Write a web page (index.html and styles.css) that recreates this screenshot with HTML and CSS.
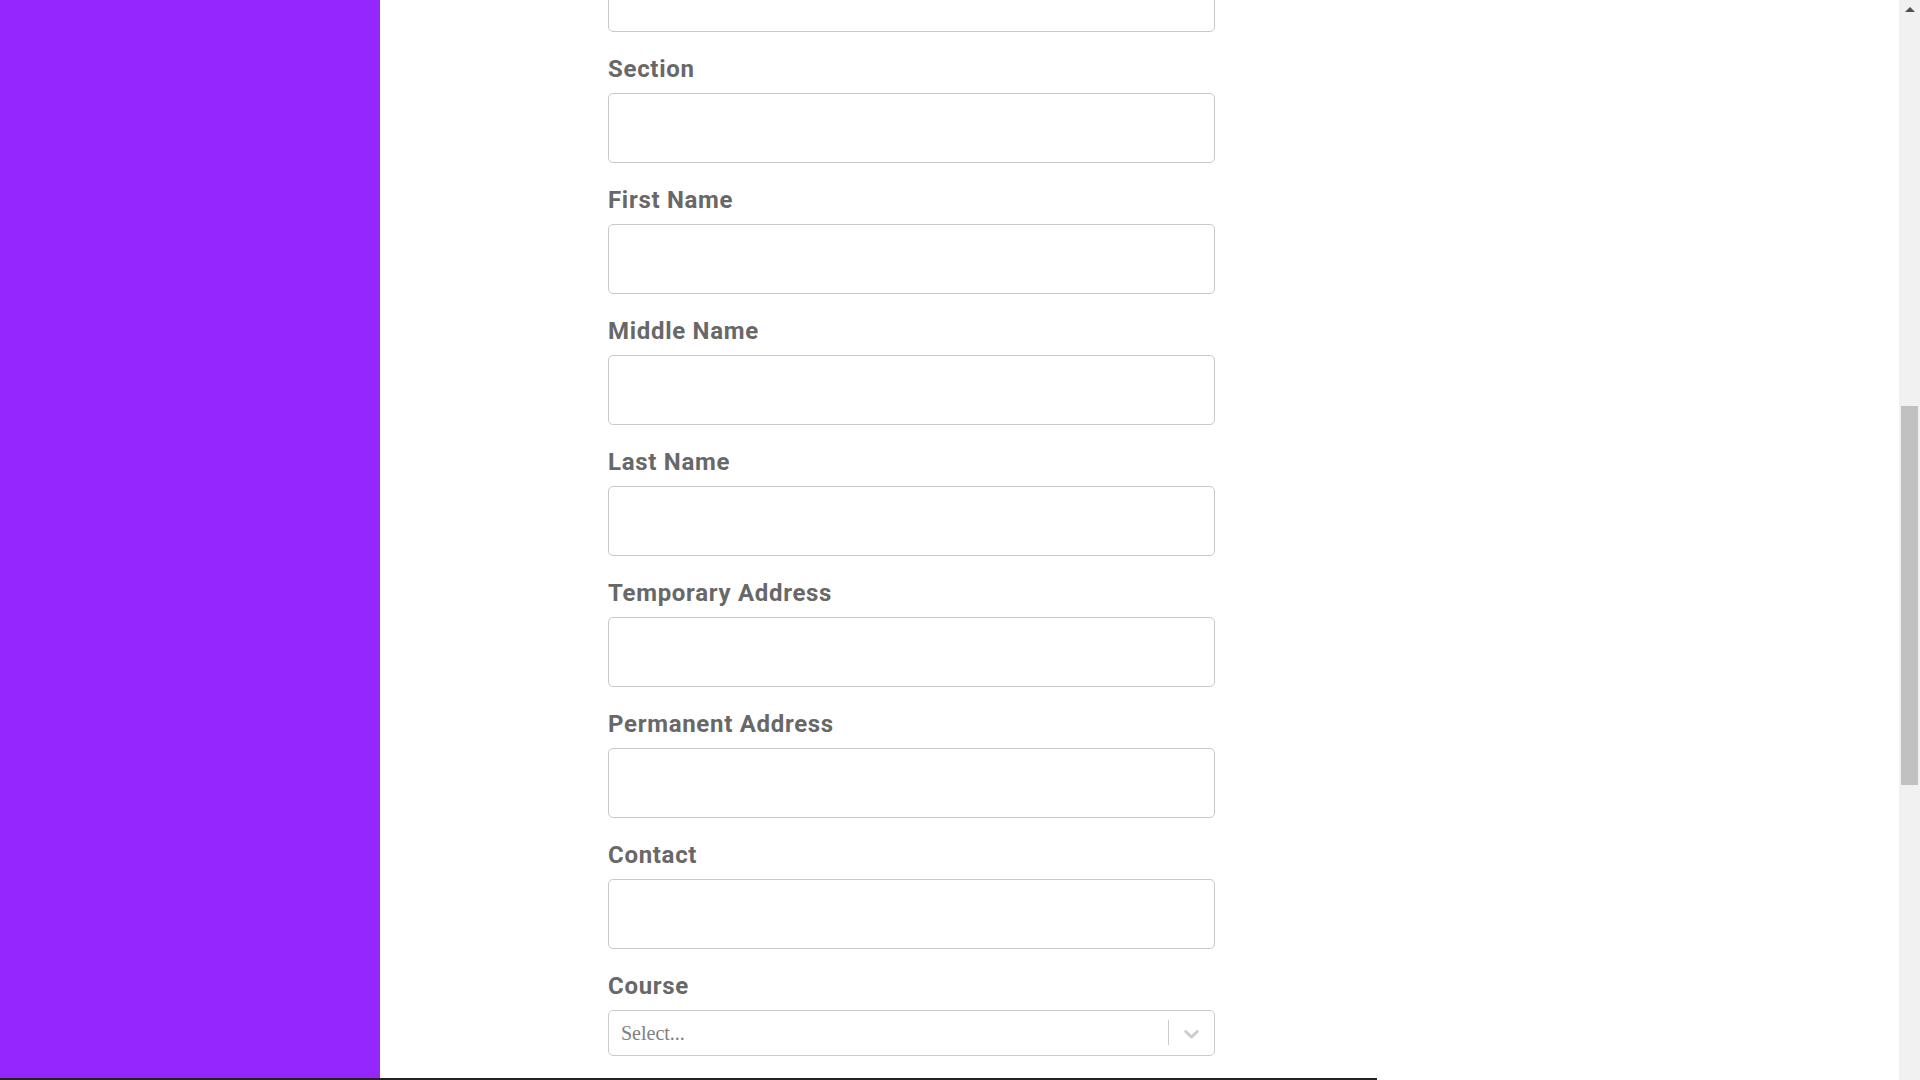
FILE: index.html
```html
<!DOCTYPE html>
<html lang="en">
<head>
<meta charset="utf-8">
<title>Student Form</title>
<link rel="stylesheet" href="styles.css">
</head>
<body>
<div class="page">
  <div class="layout">
    <aside class="sidebar"></aside>
    <main class="main">
      <form class="form">
        <div class="field field-cut">
          <input class="text-input" type="text">
        </div>
        <div class="field">
          <label class="label">Section</label>
          <input class="text-input" type="text">
        </div>
        <div class="field">
          <label class="label">First Name</label>
          <input class="text-input" type="text">
        </div>
        <div class="field">
          <label class="label">Middle Name</label>
          <input class="text-input" type="text">
        </div>
        <div class="field">
          <label class="label">Last Name</label>
          <input class="text-input" type="text">
        </div>
        <div class="field">
          <label class="label">Temporary Address</label>
          <input class="text-input" type="text">
        </div>
        <div class="field">
          <label class="label">Permanent Address</label>
          <input class="text-input" type="text">
        </div>
        <div class="field">
          <label class="label">Contact</label>
          <input class="text-input" type="text">
        </div>
        <div class="field">
          <label class="label">Course</label>
          <div class="select">
            <div class="select-value">Select...</div>
            <div class="select-indicators">
              <span class="select-sep"></span>
              <span class="select-arrow">
                <svg width="25" height="25" viewBox="0 0 20 20" aria-hidden="true"><path fill="#cccccc" d="M4.516 7.548c0.436-0.446 1.043-0.481 1.576 0l3.908 3.747 3.908-3.747c0.533-0.481 1.141-0.446 1.574 0 0.436 0.445 0.408 1.197 0 1.615-0.406 0.418-4.695 4.502-4.695 4.502-0.217 0.223-0.502 0.335-0.787 0.335s-0.57-0.112-0.789-0.335c0 0-4.287-4.084-4.695-4.502s-0.436-1.17 0-1.615z"/></svg>
              </span>
            </div>
          </div>
        </div>
      </form>
    </main>
  </div>
  <div class="rule"></div>
</div>
<div class="scrollbar">
  <div class="sb-button"><span class="sb-up"></span></div>
  <div class="sb-track"><div class="sb-thumb"></div></div>
</div>
</body>
</html>
```

FILE: styles.css
```css
* { box-sizing: border-box; }

html, body {
  margin: 0;
  padding: 0;
  height: 1080px;
  overflow: hidden;
  background: #ffffff;
}

body {
  display: flex;
  font-family: Roboto, "Liberation Sans", Arial, sans-serif;
}

.page {
  flex: 1;
  display: flex;
  flex-direction: column;
  min-width: 0;
}

.layout {
  height: 1078px;
  display: flex;
  overflow: hidden;
}

.sidebar {
  width: 380px;
  flex: none;
  background: #9526fe;
}

.main {
  flex: 1;
  overflow: hidden;
  padding-left: 228px;
}

.form {
  width: 607px;
  margin-top: -38px;
  display: flex;
  flex-direction: column;
}

.field {
  display: flex;
  flex-direction: column;
  margin-bottom: 23px;
}

.label {
  font-size: 24px;
  line-height: 28px;
  font-weight: 700;
  letter-spacing: 0.7px;
  color: #686868;
  margin-bottom: 10px;
}

.text-input {
  display: block;
  width: 100%;
  height: 70px;
  border: 1px solid #c8c8c8;
  border-radius: 5px;
  background: #ffffff;
  padding: 0 12px;
  font-size: 20px;
  outline: none;
}

.select {
  height: 46px;
  border: 1px solid #cccccc;
  border-radius: 5px;
  display: flex;
  align-items: center;
  background: #ffffff;
}

.select-value {
  flex: 1;
  padding-left: 12px;
  font-family: "Liberation Serif", "Times New Roman", serif;
  font-size: 20px;
  color: #808080;
}

.select-indicators {
  display: flex;
  align-items: center;
  align-self: stretch;
}

.select-sep {
  width: 1px;
  align-self: stretch;
  margin: 9px 0 10px;
  background: #cccccc;
}

.select-arrow {
  display: flex;
  padding: 0 10px;
}

.rule {
  height: 2px;
  width: 1377px;
  background: #222222;
}

.scrollbar {
  width: 21px;
  flex: none;
  background: #f1f1f1;
  display: flex;
  flex-direction: column;
}

.sb-button {
  height: 21px;
  display: flex;
  align-items: center;
  justify-content: center;
}

.sb-up {
  width: 0;
  height: 0;
  border-left: 5px solid transparent;
  border-right: 5px solid transparent;
  border-bottom: 5px solid #505050;
  margin-top: -2px;
}

.sb-track {
  flex: 1;
  padding: 385px 2px 0;
}

.sb-thumb {
  height: 379px;
  background: #c1c1c1;
}
```
